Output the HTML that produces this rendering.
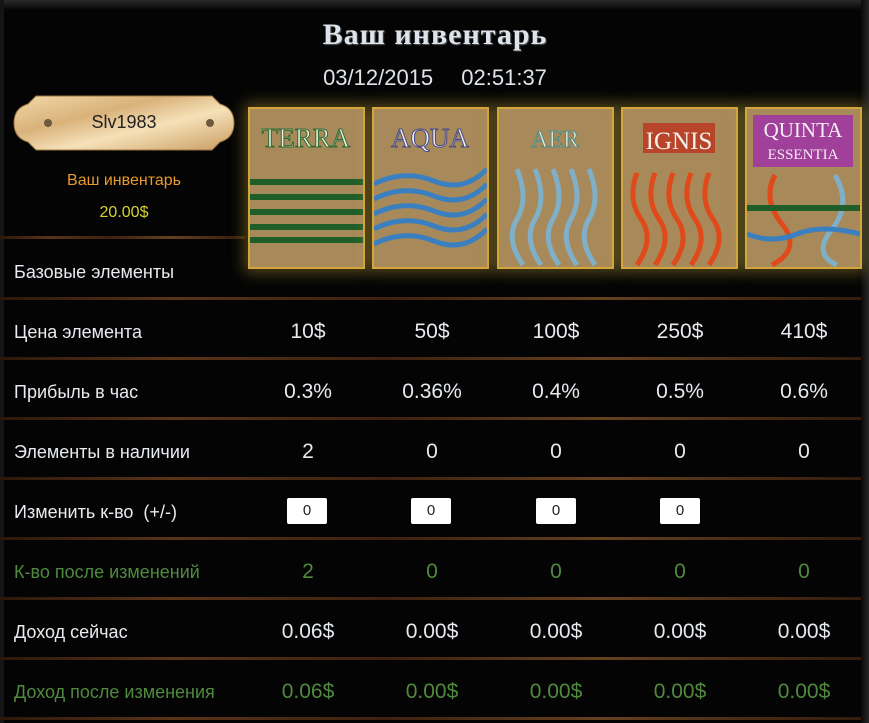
<!DOCTYPE html>
<html><head><meta charset="utf-8"><style>
*{margin:0;padding:0;box-sizing:border-box}
body{width:869px;height:723px;background:#040404;position:relative;overflow:hidden;font-family:"Liberation Sans","DejaVu Sans",sans-serif;color:#e6e9ee}
.abs{position:absolute}
.topb{left:0;top:0;width:869px;height:10px;background:linear-gradient(#2a2a2a,#111 70%,#050505)}
.rb{right:0;top:0;width:8px;height:723px;background:linear-gradient(90deg,#0a0a0a,#262626)}
.lb{left:0;top:0;width:4px;height:723px;background:#151515}
.sep{height:3px;background:linear-gradient(90deg,#2e180b,#5a3318 20%,#3d210f 45%,#65401f 70%,#331c0c)}
.t{font-size:18px;left:14px;color:#e8ebef}
.c{width:124px;text-align:center;font-size:21px}
.g{color:#4f8a3e}
.inp{width:40px;height:26px;background:#fff;border-radius:2px;color:#222;font-size:15px;text-align:center;line-height:26px}
.card{top:107px;width:117px;height:162px;box-shadow:0 0 14px 4px rgba(200,170,60,.4);border:2px solid #d4a53a}
</style></head><body>
<div class="abs topb"></div><div class="abs lb"></div><div class="abs rb"></div>
<div class="abs" style="left:300px;top:18px;width:270px;text-align:center;font-family:'Liberation Serif',serif;font-weight:bold;font-size:30px;color:#dde3ea;letter-spacing:1px;text-shadow:1px 1px 1px #555">Ваш инвентарь</div>
<div class="abs" style="left:300px;top:65px;width:270px;text-align:center;font-size:22px;color:#dfe4ea;word-spacing:22px">03/12/2015 02:51:37</div>
<svg class="abs" style="left:12px;top:94px" width="224" height="58"><defs><linearGradient id="pl" x1="0" x2="1" y1="0" y2="1"><stop offset="0" stop-color="#f1d9a8"/><stop offset=".35" stop-color="#d9b27a"/><stop offset=".6" stop-color="#f5e1b8"/><stop offset="1" stop-color="#c99c62"/></linearGradient></defs><path d="M24 2 H200 L208 10 Q222 14 222 29 Q222 44 208 48 L200 56 H24 L16 48 Q2 44 2 29 Q2 14 16 10 Z" fill="url(#pl)" stroke="#9a7340"/><circle cx="36" cy="29" r="4" fill="#6b5a40"/><circle cx="198" cy="29" r="4" fill="#6b5a40"/></svg>
<div class="abs" style="left:12px;top:112px;width:224px;text-align:center;font-size:18px;color:#222">Slv1983</div>
<div class="abs" style="left:12px;top:172px;width:224px;text-align:center;font-size:16px;color:#e89a2a">Ваш инвентарь</div>
<div class="abs" style="left:12px;top:204px;width:224px;text-align:center;font-size:16px;color:#d6d22e">20.00$</div>
<div class="abs sep" style="left:0;top:236px;width:245px"></div>

<svg class="abs card" style="left:248px" viewBox="0 0 113 158" width="117" height="162" preserveAspectRatio="none"><rect width="113" height="158" fill="#a8895a"/><text x="56" y="38" text-anchor="middle" font-family="Liberation Serif" font-size="27" fill="#eef3e8" stroke="#2f6a2f" stroke-width="1">TERRA</text><g fill="#1f5e28"><rect x="0" y="70" width="113" height="6"/><rect x="0" y="85" width="113" height="6"/><rect x="0" y="100" width="113" height="6"/><rect x="0" y="115" width="113" height="6"/><rect x="0" y="128" width="113" height="6"/></g></svg>
<svg class="abs card" style="left:372px" viewBox="0 0 113 158" width="117" height="162" preserveAspectRatio="none"><rect width="113" height="158" fill="#a8895a"/><text x="56" y="38" text-anchor="middle" font-family="Liberation Serif" font-size="27" fill="#eef0f6" stroke="#4a4a80" stroke-width="1">AQUA</text><g fill="none" stroke="#3a80c0" stroke-width="5"><path d="M0 75 Q30 60 60 72 T113 60"/><path d="M0 90 Q30 75 60 87 T113 75"/><path d="M0 105 Q30 90 60 102 T113 90"/><path d="M0 120 Q30 105 60 117 T113 105"/><path d="M0 135 Q30 120 60 132 T113 120"/></g></svg>
<svg class="abs card" style="left:497px" viewBox="0 0 113 158" width="117" height="162" preserveAspectRatio="none"><rect width="113" height="158" fill="#a8895a"/><text x="56" y="38" text-anchor="middle" font-family="Liberation Serif" font-size="24" fill="#eef3ee" stroke="#5a8a7a" stroke-width="1">AER</text><g fill="none" stroke="#7fb0c8" stroke-width="5"><path d="M18 60 Q30 90 18 110 T24 156"/><path d="M36 60 Q48 90 36 110 T42 156"/><path d="M54 60 Q66 90 54 110 T60 156"/><path d="M72 60 Q84 90 72 110 T78 156"/><path d="M90 60 Q102 90 90 110 T96 156"/></g></svg>
<svg class="abs card" style="left:621px" viewBox="0 0 113 158" width="117" height="162" preserveAspectRatio="none"><rect width="113" height="158" fill="#a8895a"/><rect x="20" y="14" width="72" height="30" fill="#b8452a"/><text x="56" y="40" text-anchor="middle" font-family="Liberation Serif" font-size="25" fill="#f4f0ea">IGNIS</text><g fill="none" stroke="#e04a1a" stroke-width="5"><path d="M14 64 Q4 90 18 110 T14 156"/><path d="M32 64 Q22 90 36 110 T32 156"/><path d="M50 64 Q40 90 54 110 T50 156"/><path d="M68 64 Q58 90 72 110 T68 156"/><path d="M86 64 Q76 90 90 110 T86 156"/></g></svg>
<svg class="abs card" style="left:745px" viewBox="0 0 113 158" width="117" height="162" preserveAspectRatio="none"><rect width="113" height="158" fill="#a8895a"/><rect x="6" y="6" width="100" height="52" fill="#a0409a"/><text x="56" y="28" text-anchor="middle" font-family="Liberation Serif" font-size="21" fill="#f4eef4">QUINTA</text><text x="56" y="50" text-anchor="middle" font-family="Liberation Serif" font-size="15" fill="#f4eef4">ESSENTIA</text><g fill="none" stroke-width="5"><path d="M28 66 Q15 90 35 115 T25 156" stroke="#e04a1a"/><path d="M88 66 Q105 95 85 120 T90 156" stroke="#7fb0c8"/><path d="M0 125 Q25 135 50 125 T113 125" stroke="#3a80c0"/></g><rect x="0" y="96" width="113" height="6" fill="#1f5e28"/></svg>

<div class="abs t" style="top:262px">Базовые элементы</div>

<div class="abs sep" style="left:0;top:297px;width:861px"></div>
<div class="abs sep" style="left:0;top:357px;width:861px"></div>
<div class="abs sep" style="left:0;top:417px;width:861px"></div>
<div class="abs sep" style="left:0;top:477px;width:861px"></div>
<div class="abs sep" style="left:0;top:537px;width:861px"></div>
<div class="abs sep" style="left:0;top:597px;width:861px"></div>
<div class="abs sep" style="left:0;top:657px;width:861px"></div>
<div class="abs sep" style="left:0;top:717px;width:861px"></div>

<div class="abs t" style="top:322px">Цена элемента</div>
<div class="abs t" style="top:382px">Прибыль в час</div>
<div class="abs t" style="top:442px">Элементы в наличии</div>
<div class="abs t" style="top:502px">Изменить к-во&nbsp; (+/-)</div>
<div class="abs t g" style="top:562px">К-во после изменений</div>
<div class="abs t" style="top:622px">Доход сейчас</div>
<div class="abs t g" style="top:682px">Доход после изменения</div>

<div class="abs c" style="left:246px;top:320px">10$</div><div class="abs c" style="left:370px;top:320px">50$</div><div class="abs c" style="left:494px;top:320px">100$</div><div class="abs c" style="left:618px;top:320px">250$</div><div class="abs c" style="left:742px;top:320px">410$</div>
<div class="abs c" style="left:246px;top:380px">0.3%</div><div class="abs c" style="left:370px;top:380px">0.36%</div><div class="abs c" style="left:494px;top:380px">0.4%</div><div class="abs c" style="left:618px;top:380px">0.5%</div><div class="abs c" style="left:742px;top:380px">0.6%</div>
<div class="abs c" style="left:246px;top:440px">2</div><div class="abs c" style="left:370px;top:440px">0</div><div class="abs c" style="left:494px;top:440px">0</div><div class="abs c" style="left:618px;top:440px">0</div><div class="abs c" style="left:742px;top:440px">0</div>
<div class="abs inp" style="left:287px;top:498px">0</div><div class="abs inp" style="left:411px;top:498px">0</div><div class="abs inp" style="left:536px;top:498px">0</div><div class="abs inp" style="left:660px;top:498px">0</div>
<div class="abs c g" style="left:246px;top:560px">2</div><div class="abs c g" style="left:370px;top:560px">0</div><div class="abs c g" style="left:494px;top:560px">0</div><div class="abs c g" style="left:618px;top:560px">0</div><div class="abs c g" style="left:742px;top:560px">0</div>
<div class="abs c" style="left:246px;top:620px">0.06$</div><div class="abs c" style="left:370px;top:620px">0.00$</div><div class="abs c" style="left:494px;top:620px">0.00$</div><div class="abs c" style="left:618px;top:620px">0.00$</div><div class="abs c" style="left:742px;top:620px">0.00$</div>
<div class="abs c g" style="left:246px;top:680px">0.06$</div><div class="abs c g" style="left:370px;top:680px">0.00$</div><div class="abs c g" style="left:494px;top:680px">0.00$</div><div class="abs c g" style="left:618px;top:680px">0.00$</div><div class="abs c g" style="left:742px;top:680px">0.00$</div>
</body></html>
